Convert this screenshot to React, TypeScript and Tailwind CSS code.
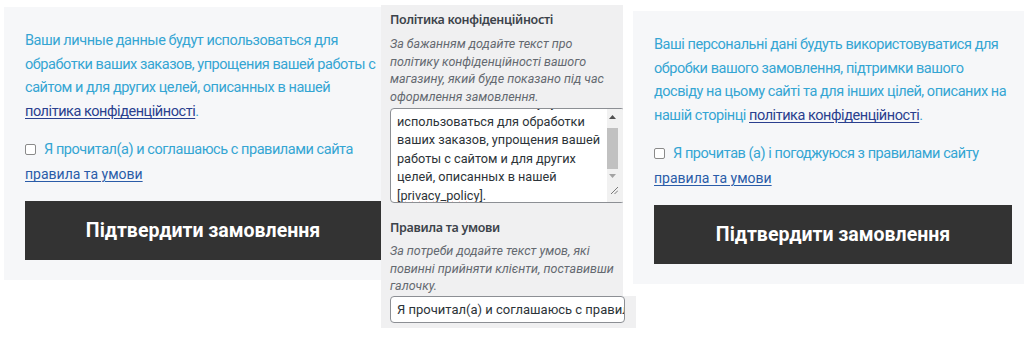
import React from 'react';

const blue = 'text-[#34a5d3]';

function Checkbox() {
  return <span className="inline-block w-[11px] h-[11px] rounded-[2px] border border-[#8a8a8a] bg-white align-[-1px]" />;
}

function CheckoutPanel({
  lines,
  linkBefore,
  agree,
  className,
}: {
  lines: string[];
  linkBefore: string;
  agree: string;
  className: string;
}) {
  return (
    <div className={`bg-[#f6f7f9] overflow-hidden pl-[21px] pt-[22px] pb-[20px] font-['Roboto',sans-serif] ${className}`}>
      <p className={`${blue} text-[14.5px] tracking-[-0.45px] leading-[23.6px] whitespace-nowrap`}>
        {lines.map((l) => (
          <span key={l}>
            {l}
            <br />
          </span>
        ))}
        {linkBefore}
        <a className="text-[#2a3f8f] underline underline-offset-2">політика конфіденційності</a>.
      </p>
      <div className={`mt-[15px] ${blue} text-[14.5px] tracking-[-0.45px] leading-[24px] whitespace-nowrap`}>
        <Checkbox />
        <span className="ml-[8px]">{agree}</span>
      </div>
      <div className="text-[14px] leading-[24px]">
        <a className="text-[#2a5ca8] underline underline-offset-2">правила та умови</a>
      </div>
      <button className="mt-[15px] h-[59px] w-full bg-[#333333] text-white text-[19.5px] font-bold">
        Підтвердити замовлення
      </button>
    </div>
  );
}

function Arrow({ up }: { up?: boolean }) {
  return (
    <svg width="7" height="4" viewBox="0 0 7 4" className="mx-auto">
      <path d={up ? 'M0 4 L3.5 0 L7 4 Z' : 'M0 0 L3.5 4 L7 0 Z'} fill={up ? '#505050' : '#a3a3a3'} />
    </svg>
  );
}

function SettingsPanel() {
  return (
    <div className="mt-[5px] w-[242px] font-['Roboto',sans-serif]">
      <div className="bg-[#f0f0f1] overflow-hidden pl-[9px] pt-[6px] h-[296px]">
        <h3 className="font-['Noto_Sans',sans-serif] text-[12.5px] tracking-[-0.3px] leading-[18px] font-semibold text-[#3c434a]">
          Політика конфіденційності
        </h3>
        <p className="mt-[6px] text-[12.5px] leading-[17.5px] italic text-[#646970] whitespace-nowrap">
          За бажанням додайте текст про
          <br />
          політику конфіденційності вашого
          <br />
          магазину, який буде показано під час
          <br />
          оформлення замовлення.
        </p>
        <div className="mt-[3px] w-[235px] h-[95px] bg-white border border-[#8c8f94] rounded-[4px] flex overflow-hidden">
          <div className="flex-1 overflow-hidden pl-[6px]">
            <p className="mt-[-15px] text-[12.7px] leading-[18.5px] text-[#2c3338] whitespace-nowrap">
              Ваши личные данные будут
              <br />
              использоваться для обработки
              <br />
              ваших заказов, упрощения вашей
              <br />
              работы с сайтом и для других
              <br />
              целей, описанных в нашей
              <br />
              [<span className="underline decoration-wavy decoration-[#e02020] decoration-1">privacy</span>
              <span className="underline decoration-wavy decoration-[#e02020] decoration-1">_policy</span>].
            </p>
          </div>
          <div className="w-[17px] bg-[#f1f1f1] flex flex-col pt-[6px] pr-[6px]">
            <Arrow up />
            <div className="mt-[9px] h-[41px] w-[11px] bg-[#c1c1c1]" />
            <div className="mt-[5px]">
              <Arrow />
            </div>
            <svg width="8" height="8" viewBox="0 0 8 8" className="mt-[8px] ml-[3px]">
              <path d="M1 8 L8 1 M4.5 8 L8 4.5" stroke="#7a7a7a" strokeWidth="1" />
            </svg>
          </div>
        </div>
        <h3 className="mt-[16px] font-['Noto_Sans',sans-serif] text-[12.5px] tracking-[-0.3px] leading-[18px] font-semibold text-[#3c434a]">
          Правила та умови
        </h3>
        <p className="mt-[5px] text-[12.5px] leading-[17.5px] italic text-[#646970] whitespace-nowrap">
          За потреби додайте текст умов, які
          <br />
          повинні прийняти клієнти, поставивши
          <br />
          галочку.
        </p>
      </div>
      <div className="bg-[#f0f0f1] w-[255px] h-[32px] pl-[9px]">
        <div className="-mt-[5px] w-[235px] h-[27px] bg-white border border-[#8c8f94] rounded-[4px] overflow-hidden pl-[6px] text-[13px] leading-[25px] text-[#2c3338] whitespace-nowrap">
          Я прочитал(а) и соглашаюсь с правилами сайта
        </div>
      </div>
    </div>
  );
}

export default function App() {
  return (
    <div className="w-[1024px] h-[347px] bg-white flex items-start overflow-hidden">
      <CheckoutPanel
        className="ml-[4px] mt-[7px] w-[377px] pr-0"
        lines={[
          'Ваши личные данные будут использоваться для',
          'обработки ваших заказов, упрощения вашей работы с',
          'сайтом и для других целей, описанных в нашей',
        ]}
        linkBefore=""
        agree="Я прочитал(а) и соглашаюсь с правилами сайта"
      />
      <SettingsPanel />
      <CheckoutPanel
        className="ml-[10px] mt-[11px] w-[391px] pr-[12px]"
        lines={[
          'Ваші персональні дані будуть використовуватися для',
          'обробки вашого замовлення, підтримки вашого',
          'досвіду на цьому сайті та для інших цілей, описаних на',
        ]}
        linkBefore="нашій сторінці "
        agree="Я прочитав (а) і погоджуюся з правилами сайту"
      />
    </div>
  );
}
